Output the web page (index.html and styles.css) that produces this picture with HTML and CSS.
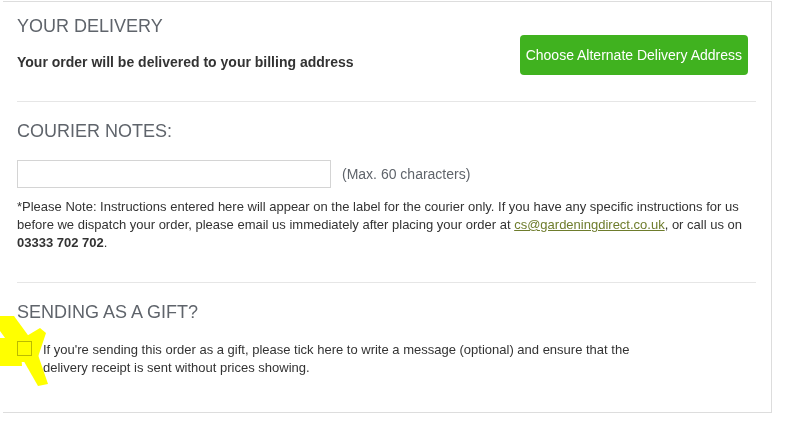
FILE: index.html
```html
<!DOCTYPE html>
<html>
<head>
<meta charset="utf-8">
<link rel="stylesheet" href="styles.css">
</head>
<body>
<div class="panel">
  <section class="section delivery">
    <div class="delivery-left">
      <h2 class="heading">YOUR DELIVERY</h2>
      <p class="billing">Your order will be delivered to your billing address</p>
    </div>
    <button class="btn-alt">Choose Alternate Delivery Address</button>
  </section>
  <hr class="sep">
  <section class="section">
    <h2 class="heading">COURIER NOTES:</h2>
    <div class="notes-row">
      <input class="notes-input" type="text">
      <span class="max">(Max. 60 characters)</span>
    </div>
    <p class="note">*Please Note: Instructions entered here will appear on the label for the courier only. If you have any specific instructions for us before we dispatch your order, please email us immediately after placing your order at <a href="#" class="mail">cs@gardeningdirect.co.uk</a>, or call us on <strong>03333 702 702</strong>.</p>
  </section>
  <hr class="sep">
  <section class="section gift">
    <h2 class="heading">SENDING AS A GIFT?</h2>
    <label class="gift-row">
      <span class="box"></span>
      <span class="gift-text">If you're sending this order as a gift, please tick here to write a message (optional) and ensure that the delivery receipt is sent without prices showing.</span>
    </label>
  </section>
  <svg class="marker" width="50" height="78" viewBox="0 312 50 78">
    <g fill="#ffff00">
      <polygon points="0,316 14,316 33,342 18,356 0,331"/>
      <polygon points="20,340 40,328 46,333 38,357"/>
      <rect x="10" y="336" width="28" height="26"/>
      <polygon points="0,338 20,338 22,366 0,366"/>
      <polygon points="22,358 37,352 48,384 38,386"/>
    </g>
  </svg>
</div>
</body>
</html>
```
FILE: styles.css
```css
* { box-sizing: border-box; }
body {
  margin: 0;
  background: #fff;
  font-family: "Liberation Sans", Arial, sans-serif;
  color: #333;
}
.panel {
  position: relative;
  margin: 1px 0 0 3px;
  width: 769px;
  height: 412px;
  border-top: 1px solid #ddd;
  border-right: 1px solid #ddd;
  border-bottom: 1px solid #ddd;
  padding: 0 15px 0 14px;
}
.heading {
  margin: 0;
  font-size: 18px;
  line-height: 20px;
  font-weight: normal;
  color: #5f646b;
}
.delivery {
  display: flex;
  justify-content: space-between;
  align-items: flex-start;
  padding-top: 14px;
  height: 99px;
}
.billing {
  margin: 16px 0 0;
  font-size: 14px;
  font-weight: bold;
  line-height: 20px;
  color: #333;
}
.btn-alt {
  margin: 19px 8px 0 0;
  height: 40px;
  padding: 0 6px;
  border: none;
  border-radius: 4px;
  background: #40b21f;
  color: #fff;
  font-family: "Liberation Sans", Arial, sans-serif;
  font-size: 14px;
}
.sep {
  margin: 0;
  border: none;
  border-top: 1px solid #e6e6e6;
}
.section .heading { margin-top: 19px; }
.delivery .heading { margin-top: 0; }
.notes-row {
  display: flex;
  align-items: center;
  margin-top: 19px;
  gap: 11px;
}
.notes-input {
  width: 314px;
  height: 28px;
  border: 1px solid #d4d4d4;
  margin: 0;
}
.max {
  font-size: 14px;
  color: #5f646b;
}
.note {
  margin: 10px 0 0;
  font-size: 13px;
  line-height: 18px;
  color: #333;
  height: 84px;
}
.mail {
  color: #6e7c2c;
  text-decoration: underline;
}
.note strong { font-weight: bold; }
.gift-row {
  display: flex;
  align-items: flex-start;
  margin-top: 19px;
  gap: 11px;
}
.box {
  flex: none;
  width: 15px;
  height: 15px;
  border: 1px solid #bbb;
  margin-top: 0;
  background: #fff;
}
.gift-text {
  font-size: 13px;
  line-height: 18px;
  max-width: 600px;
}
.marker {
  position: absolute;
  left: -3px;
  top: 310px;
  mix-blend-mode: multiply;
}
```
